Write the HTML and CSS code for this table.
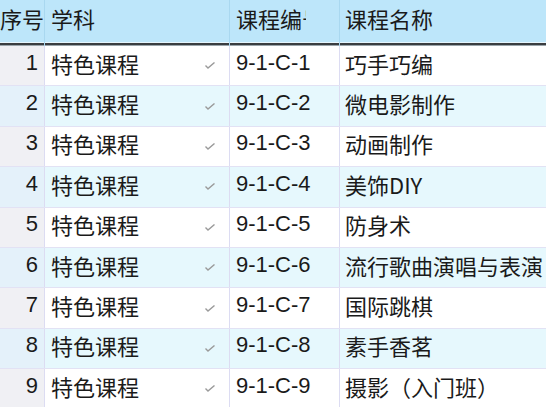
FILE: index.html
```html
<!DOCTYPE html>
<html lang="zh">
<head>
<meta charset="utf-8">
<link rel="stylesheet" href="styles.css">
</head>
<body>
<div class="grid">
  <div class="row head">
    <div class="c idx">序号</div>
    <div class="c sub">学科</div>
    <div class="c code"><span class="clip">课程编号…</span></div>
    <div class="c name">课程名称</div>
  </div>
  <div class="row odd"><div class="c idx">1</div><div class="c sub"><span>特色课程</span><svg class="dd" viewBox="0 0 10 7"><polyline points="0.5,3.5 3,6 9.5,0.5"/></svg></div><div class="c code">9-1-C-1</div><div class="c name">巧手巧编</div></div>
  <div class="row even"><div class="c idx">2</div><div class="c sub"><span>特色课程</span><svg class="dd" viewBox="0 0 10 7"><polyline points="0.5,3.5 3,6 9.5,0.5"/></svg></div><div class="c code">9-1-C-2</div><div class="c name">微电影制作</div></div>
  <div class="row odd"><div class="c idx">3</div><div class="c sub"><span>特色课程</span><svg class="dd" viewBox="0 0 10 7"><polyline points="0.5,3.5 3,6 9.5,0.5"/></svg></div><div class="c code">9-1-C-3</div><div class="c name">动画制作</div></div>
  <div class="row even"><div class="c idx">4</div><div class="c sub"><span>特色课程</span><svg class="dd" viewBox="0 0 10 7"><polyline points="0.5,3.5 3,6 9.5,0.5"/></svg></div><div class="c code">9-1-C-4</div><div class="c name">美饰DIY</div></div>
  <div class="row odd"><div class="c idx">5</div><div class="c sub"><span>特色课程</span><svg class="dd" viewBox="0 0 10 7"><polyline points="0.5,3.5 3,6 9.5,0.5"/></svg></div><div class="c code">9-1-C-5</div><div class="c name">防身术</div></div>
  <div class="row even"><div class="c idx">6</div><div class="c sub"><span>特色课程</span><svg class="dd" viewBox="0 0 10 7"><polyline points="0.5,3.5 3,6 9.5,0.5"/></svg></div><div class="c code">9-1-C-6</div><div class="c name">流行歌曲演唱与表演</div></div>
  <div class="row odd"><div class="c idx">7</div><div class="c sub"><span>特色课程</span><svg class="dd" viewBox="0 0 10 7"><polyline points="0.5,3.5 3,6 9.5,0.5"/></svg></div><div class="c code">9-1-C-7</div><div class="c name">国际跳棋</div></div>
  <div class="row even"><div class="c idx">8</div><div class="c sub"><span>特色课程</span><svg class="dd" viewBox="0 0 10 7"><polyline points="0.5,3.5 3,6 9.5,0.5"/></svg></div><div class="c code">9-1-C-8</div><div class="c name">素手香茗</div></div>
  <div class="row odd"><div class="c idx">9</div><div class="c sub"><span>特色课程</span><svg class="dd" viewBox="0 0 10 7"><polyline points="0.5,3.5 3,6 9.5,0.5"/></svg></div><div class="c code">9-1-C-9</div><div class="c name">摄影（入门班）</div></div>
</div>
</body>
</html>
```

FILE: styles.css
```css
html, body {
  margin: 0;
  padding: 0;
  background: #ffffff;
  overflow: hidden;
}
.grid {
  width: 546px;
  height: 407px;
  overflow: hidden;
  font-family: "Liberation Sans", "Noto Sans CJK SC", sans-serif;
  font-size: 22px;
  color: #1a1a1a;
}
.row {
  display: grid;
  grid-template-columns: 45px 185px 110px 1fr;
  height: 40.4px;
  box-sizing: border-box;
  border-bottom: 1px solid #e2e2f4;
}
.c {
  box-sizing: border-box;
  border-right: 1px solid #dcdcf2;
  display: flex;
  align-items: center;
  overflow: hidden;
  white-space: nowrap;
  padding-left: 6px;
  padding-bottom: 6px;
}
.row .c.name { border-right: none; }
.head {
  height: 46px;
  background: #bde6fa;
  border-bottom: none;
  box-shadow: inset 0 -1px 0 #9aa4aa, inset 0 -3px 0 #3a3d40, inset 0 -4px 0 #e6f6fd;
}
.head .c {
  border-right: 1px solid #a9d8f0;
  padding-bottom: 10px;
  font-family: "Noto Sans CJK SC", sans-serif;
}
.head .c.idx {
  padding-left: 0;
  padding-right: 0;
  justify-content: flex-start;
}
.clip {
  display: block;
  width: 70px;
  overflow: hidden;
  white-space: nowrap;
}
.c.idx {
  justify-content: flex-end;
  padding-left: 0;
  padding-right: 6px;
}
.odd .c.idx { background: #f0f0f4; }
.even { background: #e6f8fd; }
.even .c.idx { background: #e4f1fa; }
.sub {
  justify-content: space-between;
  padding-right: 14px;
}
.sub span, .name {
  font-family: "Noto Sans CJK SC", sans-serif;
}
.name { padding-left: 5px; }
.code { padding-left: 6px; }
.dd {
  width: 10px;
  height: 7px;
  fill: none;
  stroke: #9a9a9a;
  stroke-width: 1.4;
  margin-top: 6px;
}
```
